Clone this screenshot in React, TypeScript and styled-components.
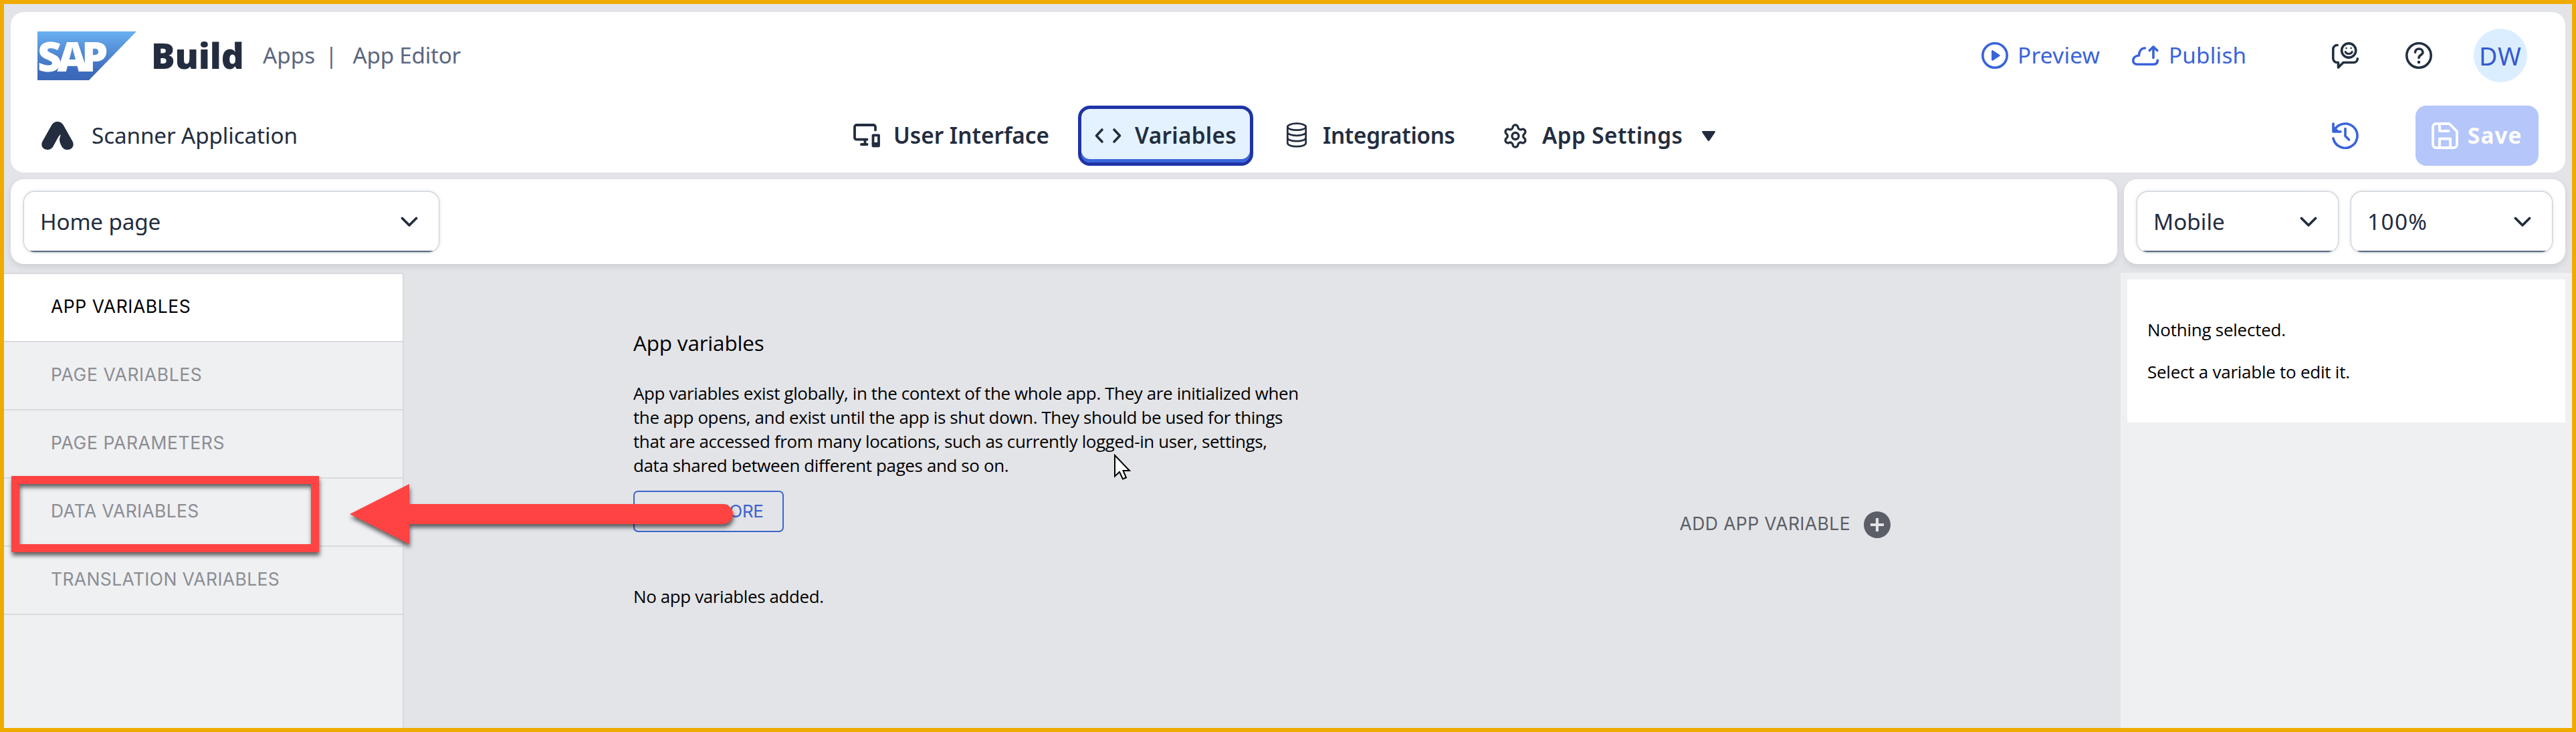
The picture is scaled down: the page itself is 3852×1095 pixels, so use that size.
import React from "react";
import styled, { createGlobalStyle } from "styled-components";
import { Settings } from "lucide-react";

const ink = "#223041";
const inkDark = "#232d3f";
const blue = "#3a63d9";
const slate = "#5b6780";
const canvasBg = "#e3e4e8";
const panelBg = "#eff0f2";
const line = "#d9dade";
const red = "#ff4343";

const GlobalStyle = createGlobalStyle`
  *, *::before, *::after { box-sizing: border-box; }
  body { margin: 0; }
`;

const Screen = styled.div`
  position: relative;
  width: 3852px;
  height: 1095px;
  display: flex;
  flex-direction: column;
  overflow: hidden;
  border: 6px solid #f0ab00;
  background: ${canvasBg};
  font-family: "Noto Sans", "Open Sans", sans-serif;
  font-size: 33.3px;
  color: ${inkDark};
`;

const Label = styled.span<{ $track?: number; $ml?: number; $up?: number }>`
  white-space: nowrap;
  line-height: 1.2;
  letter-spacing: ${(p) => p.$track ?? 0}px;
  margin-left: ${(p) => p.$ml ?? 0}px;
  padding-bottom: ${(p) => p.$up ?? 0}px;
`;

/* ---------- header ---------- */

const Header = styled.header`
  height: 240px;
  margin: 12px 10px 0;
  background: #fff;
  border-radius: 20px;
`;

const BrandRow = styled.div`
  height: 130px;
  display: flex;
  align-items: center;
  padding: 0 57px 0 40px;
  color: ${slate};
`;

const Build = styled.span`
  width: 162px;
  margin-left: 22px;
  padding-bottom: 1px;
  color: ${inkDark};
  font-size: 53px;
  font-weight: 900;
  line-height: 1;
  letter-spacing: -0.2px;
`;

const Actions = styled.div`
  margin-left: auto;
  display: flex;
  align-items: center;
`;

const Action = styled.button<{ $width: number }>`
  width: ${(p) => p.$width}px;
  display: flex;
  align-items: center;
  gap: 13px;
  padding: 0;
  border: 0;
  background: none;
  color: ${blue};
  font: inherit;
`;

const IconButton = styled.button<{ $color?: string; $mr?: number }>`
  display: flex;
  padding: 0;
  margin-right: ${(p) => p.$mr ?? 0}px;
  border: 0;
  background: none;
  color: ${(p) => p.$color ?? ink};
`;

const Avatar = styled.div`
  width: 80px;
  height: 80px;
  display: flex;
  align-items: center;
  justify-content: center;
  border-radius: 50%;
  background: #dbeeff;
  color: #3559cf;
  font-size: 37.5px;
`;

const NavRow = styled.div`
  height: 110px;
  display: flex;
  align-items: center;
  padding: 0 40px 0 46px;
`;

const AppTitle = styled.div`
  width: 1189px;
  display: flex;
  align-items: center;
`;

const NavItem = styled.button<{ $width: number; $active?: boolean }>`
  width: ${(p) => p.$width}px;
  height: 90px;
  flex: none;
  display: flex;
  align-items: center;
  gap: 20px;
  margin-right: 20px;
  padding: 0 0 0 20px;
  border: 5px solid ${(p) => (p.$active ? "#1f33a6" : "transparent")};
  border-radius: 18px;
  background: ${(p) => (p.$active ? "#e4f2ff" : "none")};
  box-shadow: ${(p) => (p.$active ? "inset 0 -5px 0 #3a66da" : "none")};
  color: ${inkDark};
  font: inherit;
  font-weight: 600;
`;

const SaveButton = styled.button`
  width: 184px;
  height: 90px;
  display: flex;
  align-items: center;
  gap: 14px;
  padding: 0 0 0 24px;
  border: 0;
  border-radius: 16px;
  background: #b4c6fa;
  color: #fff;
  font: inherit;
  font-weight: 700;
`;

/* ---------- toolbar ---------- */

const Toolbar = styled.div`
  display: flex;
  gap: 10px;
  margin: 10px 10px 0;
`;

const ToolCard = styled.div<{ $width: number }>`
  width: ${(p) => p.$width}px;
  height: 127px;
  display: flex;
  align-items: center;
  gap: 20px;
  padding: 1px 20px 0;
  border-radius: 20px;
  background: #fff;
  box-shadow: 0 4px 10px rgba(0, 0, 0, 0.1);
`;

const Select = styled.div<{ $width: number }>`
  width: ${(p) => p.$width}px;
  height: 90px;
  display: flex;
  align-items: center;
  justify-content: space-between;
  padding: 0 31px 0 24px;
  border-radius: 16px;
  background: linear-gradient(#5b6b82, #5b6b82) bottom / 100% 2px no-repeat, #fff;
  box-shadow: 0 0 0 1px #cbd1da, 0 0 5px rgba(91, 107, 130, 0.45);
  color: ${inkDark};
`;

/* ---------- workspace ---------- */

const Workspace = styled.div`
  flex: 1;
  display: flex;
  margin-top: 13px;
`;

const Sidebar = styled.nav`
  width: 598px;
  border-top: 2px solid ${line};
  border-right: 2px solid ${line};
  background: ${panelBg};
`;

const SideItem = styled.div<{ $active?: boolean }>`
  height: 102px;
  display: flex;
  align-items: center;
  padding: 0 0 3px 70px;
  border-bottom: 2px solid ${line};
  background: ${(p) => (p.$active ? "#fff" : "transparent")};
  color: ${(p) => (p.$active ? "#000" : "#8b8d93")};
  font-family: Inter, sans-serif;
  font-size: 26.5px;
`;

const Content = styled.main`
  flex: 1;
  padding: 79px 344px 0 343px;
  color: #000;
  font-family: "Open Sans", sans-serif;
  font-size: 26px;
`;

const Intro = styled.section`
  height: 318px;
  display: flex;
  align-items: flex-end;
  justify-content: space-between;
`;

const IntroText = styled.div`
  width: 1010px;
  height: 318px;
`;

const Heading = styled.h2`
  margin: 0;
  font-size: 31.5px;
  font-weight: 400;
  line-height: 52px;
  letter-spacing: -0.2px;
`;

const Copy = styled.p<{ $top: number }>`
  margin: ${(p) => p.$top}px 0 0;
  line-height: 36px;
  letter-spacing: -0.4px;
  white-space: pre-line;
`;

const OutlineButton = styled.button`
  width: 225px;
  height: 62px;
  margin-top: 20px;
  padding: 0 0 2px;
  border: 2px solid #3c65cc;
  border-radius: 7px;
  background: none;
  color: #3c65cc;
  font: 26px Inter, sans-serif;
  letter-spacing: -0.35px;
`;

const AddButton = styled.button`
  height: 40px;
  display: flex;
  align-items: center;
  gap: 20px;
  padding: 0;
  border: 0;
  background: none;
  color: #5b5e66;
  font: 26.5px Inter, sans-serif;
`;

const Inspector = styled.aside`
  width: 675px;
  padding: 10px 10px 0;
  background: ${panelBg};
`;

const InspectorCard = styled.div`
  height: 214px;
  padding: 57px 29px 0 30px;
  background: #fff;
  color: #000;
  font-family: "Open Sans", sans-serif;
  font-size: 26px;
`;

const InspectorLine = styled.p`
  margin: 0 0 27px;
  line-height: 36px;
  letter-spacing: -0.25px;
`;

/* ---------- annotations over the page ---------- */

const Highlight = styled.div`
  position: absolute;
  left: 11px;
  top: 706px;
  width: 460px;
  height: 114px;
  border: 12px solid ${red};
  filter: drop-shadow(1px 5px 3px rgba(0, 0, 0, 0.6));
`;

const Arrow = styled.svg`
  position: absolute;
  left: 514px;
  top: 714px;
  filter: drop-shadow(1px 5px 3px rgba(0, 0, 0, 0.6));
`;

const Cursor = styled.svg`
  position: absolute;
  left: 1659px;
  top: 673px;
`;

/* ---------- drawings ---------- */

const Glyph = ({ children, w = 3.6 }: { children: React.ReactNode; w?: number }) => (
  <svg width="40" height="40" viewBox="0 0 40 40" fill="none" stroke="currentColor" strokeWidth={w} strokeLinecap="round" strokeLinejoin="round">
    {children}
  </svg>
);

const SapLogo = () => (
  <svg width="148" height="73" viewBox="0 0 148 73">
    <defs>
      <linearGradient id="sap" x1="0" y1="0" x2="0" y2="1">
        <stop offset="0" stopColor="#69b0f1" />
        <stop offset="0.8" stopColor="#3e6cbd" />
        <stop offset="1" stopColor="#3c67b8" />
      </linearGradient>
    </defs>
    <path d="M0 0H148L77 73H0Z" fill="url(#sap)" />
    <text x="0 29.5 66" y="59.5" fill="#fff" fontFamily="Noto Sans, sans-serif" fontWeight="900" fontSize="62.5">
      SAP
    </text>
  </svg>
);

const AppMark = () => (
  <svg width="48" height="42" viewBox="0 0 48 42" fill={inkDark}>
    <path d="M15 5.5C16.8 2 20 0 24 0s7.200 2 9 5.500L46.500 29.500C50 36 45.500 42 38.500 42c-4 0-7-2-8.500-5.500-1.500-3-3-6-3-9.500 0-3 1.500-5 1.500-8-2.500 2-4 5-5.500 8L17.500 37C15.500 40.500 12.500 42 9 42 2.500 42-2 36 1.500 29.500Z" />
  </svg>
);

const PlayIcon = () => (
  <Glyph>
    <circle cx="20" cy="20" r="18.200" />
    <path d="M16.500 13.700v12.600L26 20Z" fill="currentColor" strokeWidth="3" />
  </Glyph>
);

const CloudUpIcon = () => (
  <Glyph>
    <path d="M19.500 9C15 9 10.800 12.500 10.500 20 5 20.500 1.800 23.500 1.800 27.500c0 3.500 2.500 5.800 6 5.800H32c4 0 6.300-2.300 6.300-6" />
    <path d="M32 23.500V7.500M26.300 12.500 32 7l5.800 5.500" />
  </Glyph>
);

const FeedbackIcon = () => (
  <Glyph>
    <path d="M8.300 4.500H8a6.200 6.200 0 0 0-6.200 6.200V24.500A6 6 0 0 0 7.800 30.500h1.700v7.500l7.500-7.500H32.500a5.800 5.800 0 0 0 5.800-5.800" />
    <circle cx="25.200" cy="12.500" r="10.600" />
    <path d="M20.200 14.500c1.200 4 8.800 4 10 0" strokeWidth="3" />
    <circle cx="21.500" cy="9" r="1.300" fill="currentColor" stroke="none" />
    <circle cx="28.600" cy="9" r="1.300" fill="currentColor" stroke="none" />
  </Glyph>
);

const HelpIcon = () => (
  <Glyph>
    <circle cx="20" cy="20" r="18.200" />
    <path d="M14.500 15.200c0-7 11.400-6.800 11.400 0 0 4.200-5.900 4-5.900 8.300" />
    <circle cx="20" cy="30" r="2.300" fill="currentColor" stroke="none" />
  </Glyph>
);

const HistoryIcon = () => (
  <Glyph>
    <path d="M2 24A18.200 18.200 0 1 0 3.800 11.500" />
    <path d="M2 2v12h11" />
    <path d="M2 6v8h9Z" fill="currentColor" strokeWidth="1" />
    <path d="M20 9.500v11l5.500 5.500" />
  </Glyph>
);

const SaveIcon = () => (
  <Glyph w={3.8}>
    <path d="M7 2H26.500L38 13.500V33a5 5 0 0 1-5 5H7a5 5 0 0 1-5-5V7a5 5 0 0 1 5-5Z" />
    <path d="M12 2.500v10.500h13.500M12 38V24.500H28V38" />
  </Glyph>
);

const DevicesIcon = () => (
  <Glyph w={3.8}>
    <path d="M20.500 25.700H5a3 3 0 0 1-3-3V7a3 3 0 0 1 3-3H30a3 3 0 0 1 3 3v4.500M17.500 26v6.500M12 33h8.500" />
    <path d="M29.500 19.300h8.500v16h-8.500Z" />
    <path d="M29.500 32h8" />
  </Glyph>
);

const CodeIcon = () => (
  <Glyph>
    <path d="M11 11 2.500 20l8.500 9M29 11l8.500 9-8.500 9" />
  </Glyph>
);

const DatabaseIcon = () => (
  <Glyph w={2.7}>
    <ellipse cx="20" cy="6.700" rx="13.700" ry="5" />
    <path d="M6.300 6.700V31c0 2.800 6 5.200 13.700 5.200S33.700 33.800 33.700 31V6.700M6.300 14.700c0 2.800 6 5.200 13.700 5.200s13.700-2.400 13.700-5.200M6.300 23c0 2.800 6 5.200 13.700 5.200S33.700 25.800 33.700 23" />
  </Glyph>
);

const IconSlot = styled.span`
  width: 40px;
  height: 48px;
  flex: none;
  display: flex;
  align-items: center;
  justify-content: center;
`;

const Caret = styled.svg`
  margin-left: 9px;
`;

const Chevron = () => (
  <svg width="26" height="16" viewBox="0 0 26 16" fill="none" stroke={inkDark} strokeWidth="3.800" strokeLinecap="round" strokeLinejoin="round">
    <path d="M2.500 2.500 13 13 23.500 2.500" />
  </svg>
);

const sections: [string, number][] = [
  ["APP VARIABLES", 0.55],
  ["PAGE VARIABLES", 0.6],
  ["PAGE PARAMETERS", 0.6],
  ["DATA VARIABLES", 0.3],
  ["TRANSLATION VARIABLES", 0.35],
];

export default function App() {
  return (
    <Screen>
      <GlobalStyle />
      <Header>
        <BrandRow>
          <SapLogo />
          <Build>Build</Build>
          <Label $ml={5}>Apps</Label>
          <Label $ml={15}>|</Label>
          <Label $ml={23} $track={-0.3}>App Editor</Label>
          <Actions>
            <Action $width={225}>
              <PlayIcon />
              <Label $ml={1} $track={0.3}>Preview</Label>
            </Action>
            <Action $width={299}>
              <CloudUpIcon />
              <Label $ml={2} $track={0.2}>Publish</Label>
            </Action>
            <IconButton $mr={70}><FeedbackIcon /></IconButton>
            <IconButton $mr={62}><HelpIcon /></IconButton>
            <Avatar><Label $track={1}>DW</Label></Avatar>
          </Actions>
        </BrandRow>
        <NavRow>
          <AppTitle>
            <AppMark />
            <Label $ml={27} $track={-0.15}>Scanner Application</Label>
          </AppTitle>
          <NavItem $width={341}>
            <IconSlot><DevicesIcon /></IconSlot>
            <Label>User Interface</Label>
          </NavItem>
          <NavItem $width={262} $active>
            <IconSlot><CodeIcon /></IconSlot>
            <Label $track={0.3}>Variables</Label>
          </NavItem>
          <NavItem $width={307}>
            <IconSlot><DatabaseIcon /></IconSlot>
            <Label $ml={-1} $track={-0.35}>Integrations</Label>
          </NavItem>
          <NavItem $width={380}>
            <IconSlot><Settings size={45} strokeWidth={2} /></IconSlot>
            <Label $track={0.4}>App Settings</Label>
            <Caret width="20" height="15" viewBox="0 0 20 15" fill={inkDark}>
              <path d="M1.500 0h17c1.500 0 1.800 1.200 1 2.200L11.500 14c-.8 1.300-2.200 1.300-3 0L.5 2.200C-.3 1.200 0 0 1.500 0Z" />
            </Caret>
          </NavItem>
          <Actions>
            <IconButton $color={blue} $mr={85}><HistoryIcon /></IconButton>
            <SaveButton>
              <SaveIcon />
              <Label $track={1.1}>Save</Label>
            </SaveButton>
          </Actions>
        </NavRow>
      </Header>

      <Toolbar>
        <ToolCard $width={3150}>
          <Select $width={620}><Label $track={-0.2}>Home page</Label><Chevron /></Select>
        </ToolCard>
        <ToolCard $width={660}>
          <Select $width={300}><Label>Mobile</Label><Chevron /></Select>
          <Select $width={300}><Label $track={1.4}>100%</Label><Chevron /></Select>
        </ToolCard>
      </Toolbar>

      <Workspace>
        <Sidebar>
          {sections.map(([name, track], i) => (
            <SideItem key={name} $active={i === 0}>
              <Label $track={track}>{name}</Label>
            </SideItem>
          ))}
        </Sidebar>
        <Content>
          <Intro>
            <IntroText>
              <Heading>App variables</Heading>
              <Copy $top={31}>
                {`App variables exist globally, in the context of the whole app. They are initialized when
                the app opens, and exist until the app is shut down. They should be used for things
                that are accessed from many locations, such as currently logged-in user, settings,
                data shared between different pages and so on.`}
              </Copy>
              <OutlineButton>LEARN MORE</OutlineButton>
            </IntroText>
            <AddButton>
              <Label $track={0.4} $up={2}>ADD APP VARIABLE</Label>
              <svg width="40" height="40" viewBox="0 0 40 40">
                <circle cx="20" cy="20" r="20" fill="#5b5e66" />
                <path d="M20 10V30M10 20H30" stroke={canvasBg} strokeWidth="4.200" />
              </svg>
            </AddButton>
          </Intro>
          <Copy $top={69}>No app variables added.</Copy>
        </Content>
        <Inspector>
          <InspectorCard>
            <InspectorLine>Nothing selected.</InspectorLine>
            <InspectorLine>Select a variable to edit it.</InspectorLine>
          </InspectorCard>
        </Inspector>
      </Workspace>

      <Highlight />
      <Arrow width="590" height="100" viewBox="0 0 590 100">
        <path d="M3 49 92 4V34H561a15 15 0 0 1 0 30H92V94Z" fill={red} />
      </Arrow>
      <Cursor width="27" height="40" viewBox="0 0 27 40">
        <path d="M2 2V33.500L9 27l5 10.500 5-2L14.500 25H24Z" fill="#fff" stroke="#000" strokeWidth="2" />
      </Cursor>
    </Screen>
  );
}
